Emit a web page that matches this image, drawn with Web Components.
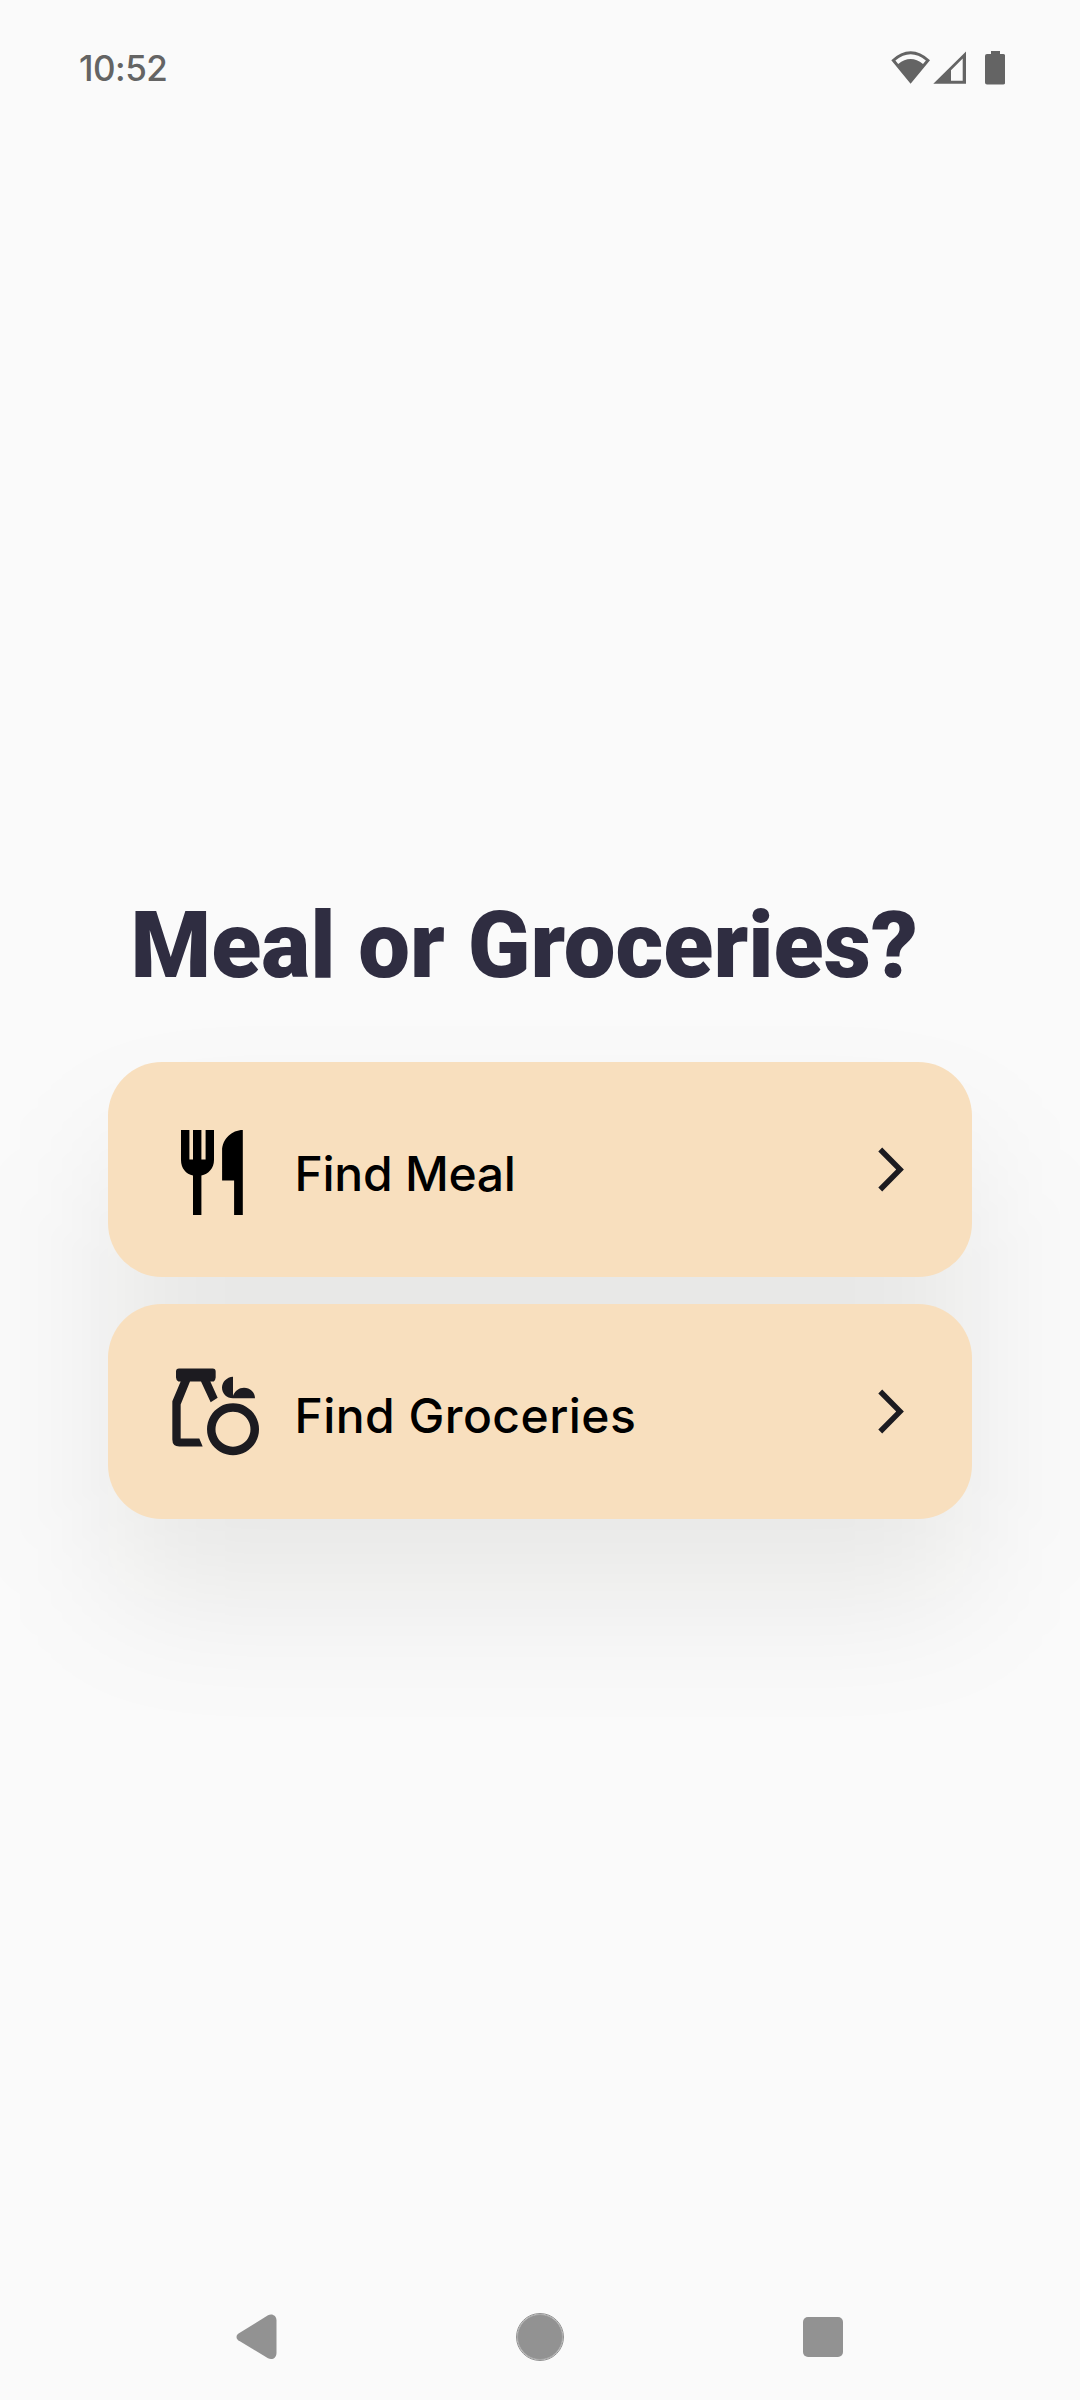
<!DOCTYPE html>
<html lang="en"><head><meta charset="utf-8"><title>Meal or Groceries?</title>
<style>html,body{margin:0;background:#fafafa}</style></head>
<body>
<app-screen></app-screen>
<script>
const define = (name, html) => customElements.define(name, class extends HTMLElement {
  constructor() { super(); this.attachShadow({mode: 'open'}).innerHTML = html; }
});

define('status-bar', `<style>
:host{display:flex;box-sizing:border-box;height:136px;padding:0 75px 0 79px;justify-content:space-between;align-items:flex-start;color:#646464}
.time{font:500 35px/40px Inter,sans-serif;margin-top:48px;letter-spacing:-.5px;white-space:nowrap}
.icons{display:flex;margin-top:50px}
svg{display:block}
</style>
<span class="time"><slot></slot></span>
<div class="icons">
<svg width="115" height="36" viewBox="890 50 115 36" fill="currentColor">
<path fill-rule="evenodd" d="M891.3 60.2Q910.6 42.5 930 60.2L910.6 83.8ZM895.4 60.5L898.2 64.1Q910.6 54 923 64.1L925.9 60.5Q910.6 47.8 895.4 60.5Z"/>
<path fill-rule="evenodd" d="M966 51.5V83.7H933.3ZM951 70.3V80.7H962.7V58.6Z"/>
<path d="M991 51h9v3h3.2q2 0 2 2v26.5q0 2-2 2h-16.2q-2 0-2-2V56q0-2 2-2h4z"/>
</svg></div>`);

define('page-title', `<style>
:host{display:block;font:900 92px/108px Roboto,sans-serif;color:#2f2d41;white-space:nowrap;padding-left:130.5px}
</style><slot></slot>`);

define('option-card', `<style>
:host{display:flex;box-sizing:border-box;height:215px;border-radius:54px;background:#f8dfbe;padding:0 68px 0 60px;align-items:center}
.label{flex:1;font:500 48px/58px Inter,sans-serif;color:#000;margin-left:26.5px;padding-top:8px;white-space:nowrap;letter-spacing:var(--track,0)}
svg{display:block;overflow:visible}
</style>
<slot name="icon"></slot><span class="label"><slot></slot></span>
<svg width="26" height="44" viewBox="878.3 1147.5 26 44"><path fill="#1c1b20" d="M882.5 1147L904.2 1169L882.5 1191L878.6 1187.1L896.5 1169L878.6 1150.9Z"/></svg>`);

define('meal-icon', `<style>:host{display:block}svg{display:block}</style>
<svg width="100" height="100" viewBox="168 1119.5 100 100">
<path d="M181 1129.5h8.400v29.600h3.600v-29.600h8.400v29.600h4.200v-29.600h8.400v30c0 8.200-5.600 14.200-12.600 15.600v39.300h-8.400v-39.300c-7-1.400-12-7.400-12-15.600zM242.800 1129.500v84.900h-8.700v-34.300h-12v-30c0-11.500 9.800-20.600 20.700-20.600z"/></svg>`);

define('grocery-icon', `<style>:host{display:block}svg{display:block}</style>
<svg width="100" height="100" viewBox="24 19.5 300 300" fill="#1c1b20">
<path d="M57 39H158Q167 39 167 48V66Q167 72 161 78H151L173 127L152 140L123 78H90L62 147V249H118L128 273H58Q37 273 37 252V137L62 78H55Q48 73 48 66V48Q48 39 57 39Z"/>
<path fill-rule="evenodd" d="M219 143a78 78 0 1 0 .1 0zM219 168.500a52.500 52.500 0 1 1-.1 0z"/>
<path d="M219 64V121C225 106 237 97 252 97C270 97 285 110 285 128.500H219C200 128.500 186 114 186 97C186 80 200 65 219 64Z"/>
</svg>`);

define('nav-bar', `<style>
:host{display:flex;box-sizing:border-box;height:126px;align-items:center;justify-content:space-between;padding:0 237.400px 0 236.400px;color:#929292}
svg,i{display:block}
.home{width:44px;height:44px;border-radius:50%;background:currentColor;border:1px solid #aaa;outline:1.5px solid #929292}
.recent{width:40px;height:40.500px;border-radius:5px;background:currentColor}
</style>
<svg width="41" height="46" viewBox="0 0 41 46" fill="currentColor"><path d="M2.200 19.700L32 1.300C36-.8 40.500 1.500 40.500 6.500V39C40.500 44 36 46.500 32 44.300L2.200 26.200C0 24.600 0 21.300 2.200 19.700Z"/></svg>
<i class="home"></i><i class="recent"></i>`);

define('option-list', `<style>
:host{display:grid}
.shade,.cards{grid-area:1/1}
.shade{border-radius:54px;background:rgba(20,15,0,.073);transform:translateY(81px);filter:blur(65px)}
.cards{display:flex;flex-direction:column;gap:27px;z-index:1}
</style>
<div class="shade"></div><div class="cards"><slot></slot></div>`);

define('app-screen', `<style>
:host{display:flex;flex-direction:column;box-sizing:border-box;width:1080px;height:2400px;background:#fafafa;overflow:hidden}
main{flex:1;padding-top:756px}
option-list{margin:62px 108px 0}
.meal{--track:-.27px}
.groceries{--track:.45px}
</style>
<status-bar>10:52</status-bar>
<main><page-title>Meal or Groceries?</page-title>
<option-list>
<option-card class="meal"><meal-icon slot="icon"></meal-icon>Find Meal</option-card>
<option-card class="groceries"><grocery-icon slot="icon"></grocery-icon>Find Groceries</option-card>
</option-list></main>
<nav-bar></nav-bar>`);
</script>
</body></html>
